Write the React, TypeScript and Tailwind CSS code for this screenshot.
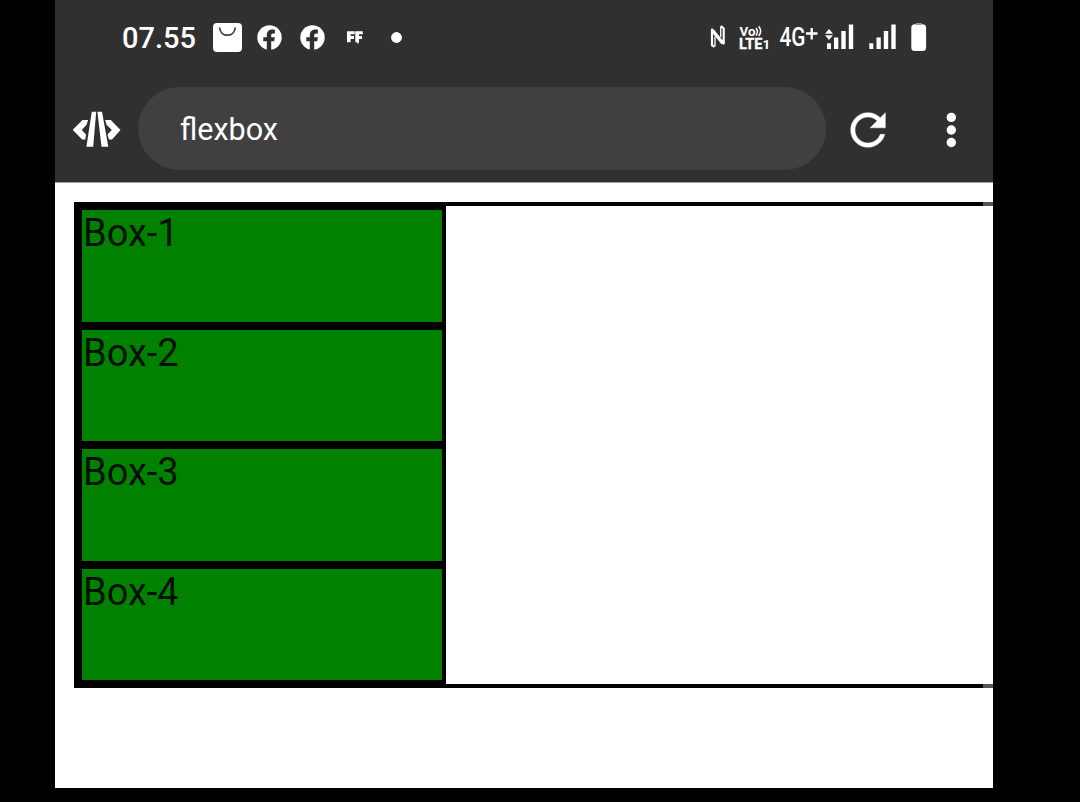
const boxes = ["Box-1", "Box-2", "Box-3", "Box-4"];

function FacebookIcon({ className }: { className: string }) {
  return (
    <svg className={className} viewBox="0 0 25 25">
      <circle cx="12.5" cy="12.5" r="12.2" fill="#fff" />
      <path
        d="M9.800 25V16.300H6.300v-4h3.500v-1.900c0-3.700 1.900-5.900 5.400-5.900 1.200 0 2.700.2 2.700.2v3.700h-1.700c-1.500 0-2 .8-2 1.900v2h3.700l-.7 4h-3V25z"
        fill="#303030"
      />
    </svg>
  );
}

function StatusBar() {
  return (
    <div className="flex h-[76px] shrink-0 items-center pl-[67px] text-white">
      <span className="w-[91px] pt-px text-[29px] leading-[75px] font-medium">07.55</span>
      <svg className="mb-[1px] h-[29px] w-[29px]" viewBox="0 0 29 29">
        <rect width="29" height="29" rx="4" fill="#fff" />
        <path d="M6.500 4.500c.6 5 4 7.700 7.900 7.700s7.300-2.700 7.900-7.700" fill="none" stroke="#404040" strokeWidth="1.800" />
      </svg>
      <FacebookIcon className="mb-[1px] ml-[15px] h-[25px] w-[25px]" />
      <FacebookIcon className="mb-[1px] ml-[18px] h-[25px] w-[25px]" />
      <svg className="mb-[1px] ml-[22px] h-[13px] w-[17px]" viewBox="0 0 17 13">
        <path d="M0 .300H7.700V3.300H3.600V5H7V8H3.600V11.200H0zM8.300.300H15.800V3.300H12V5H15V8H12V11.700L10.400 13V11.200H8.300z" fill="#fff" />
      </svg>
      <svg className="ml-[27px] h-[12px] w-[12px]" viewBox="0 0 12 12">
        <circle cx="5.500" cy="5.500" r="5.400" fill="#fff" />
      </svg>
      <svg className="mb-[2px] ml-[307px] h-[24px] w-[16px]" viewBox="710 25 16 24">
        <path d="M714.500 46.800L712 45.200V29.500L723.700 43.500V28.500L721 26" fill="none" stroke="#fff" strokeWidth="2.200" strokeLinejoin="round" />
        <path d="M712.500 30.500L723 43.500" fill="none" stroke="#fff" strokeWidth="3.400" />
        <path d="M715 46.500V36.500M720.700 26.500V37" fill="none" stroke="#fff" strokeWidth="1.300" />
      </svg>
      <svg className="mb-[2px] ml-[12px] h-[26px] w-[34px] overflow-visible" viewBox="738 24 34 26" fill="#fff">
        <text x="739.500" y="35.700" fontSize="13" fontWeight="700" textLength="16" lengthAdjust="spacingAndGlyphs">Vo</text>
        <path d="M756 28q2.800 3.800 0 7.500M758.700 26.300q4 5 0 9.700" fill="none" stroke="#fff" strokeWidth="1.500" />
        <text x="739" y="48.500" fontSize="14.500" fontWeight="700" textLength="23.500" lengthAdjust="spacingAndGlyphs" stroke="#fff" strokeWidth=".3">LTE</text>
        <text x="762.500" y="48.500" fontSize="13.500" fontWeight="700">1</text>
      </svg>
      <svg className="mb-[2px] ml-[7px] h-[26px] w-[40px] overflow-visible" viewBox="779 24 40 26" fill="#fff">
        <text x="779.500" y="46.300" fontSize="25" fontWeight="500" textLength="26" lengthAdjust="spacingAndGlyphs">4G</text>
        <path d="M806 33.500H817.500M811.700 28V39.500" stroke="#fff" strokeWidth="2.300" />
      </svg>
      <svg className="mb-[2px] ml-[5px] h-[26px] w-[30px]" viewBox="824 24 30 26" fill="#fff">
        <path d="M827 43.300h4V49h-4zM834 37.500h4.300V49H834zM841.300 31h4.400V49h-4.400zM848.800 24.500h4.400V49h-4.400zM825 33.700l4-4.700 4 4.700zM825 35.200h8l-4 4.800z" />
      </svg>
      <svg className="mb-[2px] ml-[14px] h-[26px] w-[30px]" viewBox="868 24 30 26" fill="#fff">
        <path d="M869.300 43.300h4V49h-4zM876.500 37.500h4.300V49h-4.300zM883.800 31h4.400V49h-4.400zM891.300 24.500h4.400V49h-4.400z" />
      </svg>
      <svg className="mb-[2px] ml-[13px] h-[30px] w-[16px]" viewBox="911 22 16 30" fill="#fff">
        <rect x="911.300" y="24.300" width="14.800" height="26.700" rx="3.500" />
        <rect x="915.500" y="23" width="6.500" height="2" rx="1" fill="#9a9a9a" />
      </svg>
    </div>
  );
}

function Toolbar() {
  return (
    <div className="flex h-[107px] shrink-0 items-center border-b border-[#a0a0a0] pl-[18px]">
      <svg className="mt-[1px] h-[37px] w-[48px]" viewBox="73 111 48 37" fill="#fff">
        <path d="M91.800 111.800h4.400l-3 35H86.400zM97.400 111.800h4.600l6.300 35h-6.800zM72.700 129.900l9.800-9.900h5.600l-1.500 4.800-4.800 5.100 4.200 4.700-.8 4.900h-3zM120.500 129.900l-9.700-9.900h-5.700l1.500 4.800 5.200 5.100-4.300 4.700 1.500 4.900h3z" />
      </svg>
      <div className="mb-[1px] ml-[17px] flex h-[83px] w-[688px] items-center rounded-full bg-[#404040] pl-[42px]">
        <span className="pt-[3px] text-[30.5px] leading-[40px] text-white">flexbox</span>
      </div>
      <svg className="mt-[1px] ml-[16px] h-[52px] w-[52px]" viewBox="0 0 24 24">
        <path
          d="M17.650 6.350C16.200 4.900 14.210 4 12 4c-4.420 0-7.990 3.580-7.990 8s3.570 8 7.990 8c3.730 0 6.840-2.550 7.730-6h-2.080c-.82 2.330-3.040 4-5.650 4-3.310 0-6-2.690-6-6s2.690-6 6-6c1.660 0 3.140.69 4.220 1.780L13 11h7V4z"
          fill="#fff"
          stroke="#fff"
          strokeWidth=".2"
        />
      </svg>
      <svg className="mt-[1px] ml-[52px] h-[36px] w-[11px]" viewBox="0 0 11 36" fill="#fff">
        <circle cx="5.300" cy="5.400" r="4.700" />
        <circle cx="5.300" cy="18" r="4.700" />
        <circle cx="5.300" cy="30.500" r="4.700" />
      </svg>
    </div>
  );
}

export default function App() {
  return (
    <div className="h-[802px] w-[1080px] overflow-hidden bg-black pl-[55px] font-['Roboto','Liberation_Sans',sans-serif]">
      <div className="flex h-[788px] w-[938px] flex-col overflow-hidden bg-white">
        <header className="shrink-0 bg-[#303030]">
          <StatusBar />
          <Toolbar />
        </header>
        <main className="pt-[19px] pl-[19px]">
          <div className="flex h-[486px]">
            <div className="flex w-[909px] shrink-0 flex-col border-y-4 border-l-4 border-black">
              {boxes.map((label) => (
                <div
                  key={label}
                  className="h-[119.5px] w-[368px] border-4 border-black bg-[#008200] pt-px pl-px text-[38px] leading-[45px] text-black/90"
                >
                  {label}
                </div>
              ))}
            </div>
            <div className="w-[10px] border-y-4 border-[#555555]" />
          </div>
        </main>
      </div>
    </div>
  );
}
